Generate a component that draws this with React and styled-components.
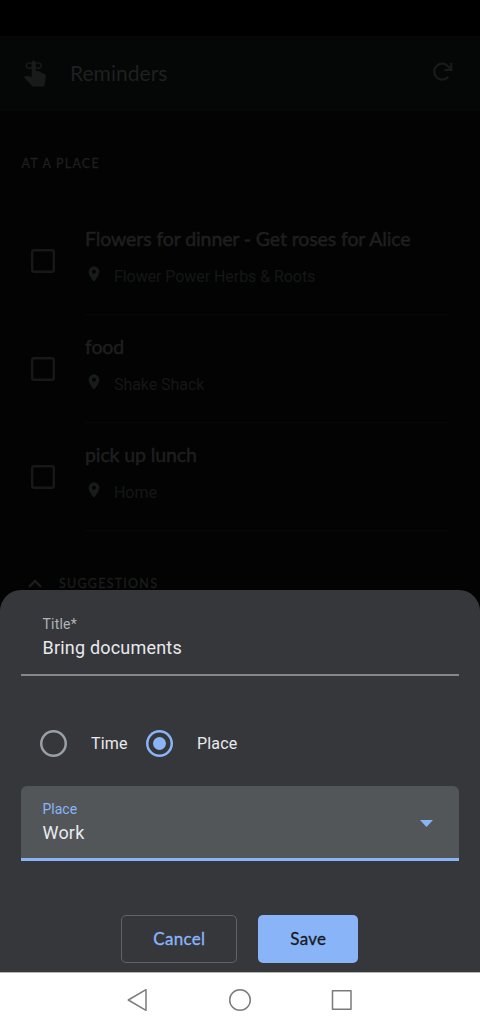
import React from "react";
import styled, { createGlobalStyle } from "styled-components";

const Global = createGlobalStyle`
  *, *::before, *::after { box-sizing: border-box; }
  body { margin: 0; background: #000; }
  button { appearance: none; padding: 0; margin: 0; }
`;

const brand = `Lato, "Open Sans", sans-serif`;
const plain = `Roboto, "Noto Sans", sans-serif`;

const Screen = styled.div`
  width: 480px;
  height: 1028px;
  display: flex;
  flex-direction: column;
  overflow: hidden;
  background: #030303;
  font-family: ${plain};
`;

const StatusBar = styled.div`
  flex: none;
  height: 36px;
  background: #000;
`;

const Header = styled.header`
  flex: none;
  height: 75px;
  display: flex;
  align-items: center;
  padding: 0 27px 2px 23px;
  background: #040706;
  color: #181b1a;
`;

const Heading = styled.h1`
  flex: 1;
  margin: 0 0 0 22px;
  font: 400 21px/28px ${brand};
  letter-spacing: 0.03px;
  color: #1f2020;
`;

const Content = styled.main`
  flex: none;
  height: 479px;
  overflow: hidden;
`;

const SectionLabel = styled.h2`
  margin: 0;
  padding: 43px 0 0 21.5px;
  font: 400 12.5px/20px ${brand};
  -webkit-text-stroke: 0.3px currentColor;
  letter-spacing: 1.2px;
  color: #1e1f1f;
`;

const List = styled.ul`
  list-style: none;
  margin: 0;
  padding: 33px 0 0 31px;
`;

const Item = styled.li`
  height: 108px;
  display: flex;
`;

const Checkbox = styled.span`
  flex: none;
  width: 24px;
  height: 24px;
  margin: 42px 30px 0 0;
  box-shadow: inset 0 0 0 2.4px #171919;
  border-radius: 3px;
`;

const ItemBody = styled.div`
  width: 364px;
  padding-top: 19px;
  border-bottom: 1px solid #070808;
`;

const ItemTitle = styled.div`
  font: 400 19.5px/26px ${brand};
  -webkit-text-stroke: 0.5px currentColor;
  letter-spacing: -0.11px;
  color: #1e1f1f;
  white-space: nowrap;
`;

const ItemPlace = styled.div`
  display: flex;
  align-items: center;
  margin-top: 13px;
  padding-left: 3px;
  font-size: 16px;
  line-height: 24px;
  letter-spacing: -0.06px;
  color: #141717;
  svg { margin: -7px 14px 0 0; color: #181b1b; }
`;

const Suggestions = styled.div`
  display: flex;
  align-items: center;
  padding: 41px 0 0 28px;
  font: 400 12.5px/24px ${brand};
  -webkit-text-stroke: 0.3px currentColor;
  letter-spacing: 1.25px;
  color: #1c1d1d;
  svg { margin-right: 17px; }
`;

const Sheet = styled.section`
  flex: none;
  height: 382px;
  padding: 0 21px;
  border-radius: 21px 21px 0 0;
  background: #36373b;
  display: flex;
  flex-direction: column;
`;

const Field = styled.div`
  height: ${(p) => (p.$filled ? 75 : 86)}px;
  padding: ${(p) => (p.$filled ? "12px 26px 0 21.500px" : "23px 26px 0 21.500px")};
  display: flex;
  justify-content: space-between;
  border-radius: ${(p) => (p.$filled ? "6px 6px 0 0" : 0)};
  border-bottom: ${(p) => (p.$filled ? "3px solid #8ab4f8" : "2px solid #85878c")};
  background: ${(p) => (p.$filled ? "#525659" : "transparent")};
`;

const FieldLabel = styled.div`
  font-size: 14px;
  line-height: 22px;
  letter-spacing: ${(p) => (p.$active ? 0 : 0.2)}px;
  color: ${(p) => (p.$active ? "#8ab4f8" : "#b0b3b8")};
`;

const FieldValue = styled.div`
  font-size: 18px;
  line-height: 26px;
  letter-spacing: 0.2px;
  color: #e8eaed;
`;

const Arrow = styled.svg`
  margin-top: 22px;
`;

const Choices = styled.div`
  display: flex;
  align-items: center;
  height: 110px;
  padding: 25px 0 0 19px;
`;

const Choice = styled.label`
  display: flex;
  align-items: center;
  margin-right: 18.5px;
  font-size: 16px;
  line-height: 24px;
  letter-spacing: 0.15px;
  color: #e8eaed;
`;

const Radio = styled.span`
  width: 27px;
  height: 27px;
  margin-right: 24px;
  display: grid;
  place-items: center;
  border-radius: 50%;
  box-shadow: inset 0 0 0 2.5px ${(p) => (p.$on ? "#8ab4f8" : "#9aa0a6")};
  &::after {
    content: "";
    width: 13px;
    height: 13px;
    border-radius: 50%;
    background: ${(p) => (p.$on ? "#8ab4f8" : "transparent")};
  }
`;

const Actions = styled.div`
  display: flex;
  justify-content: center;
  gap: 21px;
  padding: 54px 0.4px 0 0;
`;

const Button = styled.button`
  width: ${(p) => (p.$primary ? 100 : 116)}px;
  height: 48px;
  border: ${(p) => (p.$primary ? "0" : "1px solid #606367")};
  border-radius: 5px;
  background: ${(p) => (p.$primary ? "#8ab4f8" : "transparent")};
  color: ${(p) => (p.$primary ? "#17191d" : "#8ab4f8")};
  font: 400 17px/24px ${brand};
  -webkit-text-stroke: 0.3px currentColor;
  letter-spacing: 0.3px;
`;

const NavBar = styled.nav`
  flex: none;
  height: 56px;
  display: flex;
  justify-content: center;
  align-items: center;
  gap: 78px;
  padding-bottom: 1px;
  background: #fff;
  border-top: 1px solid #b5b5b7;
`;

const ReminderIcon = () => (
  <svg width="25" height="30" viewBox="0 0 25 30">
    <g fill="none" stroke="currentColor" strokeWidth="1.3">
      <ellipse cx="6.5" cy="7.6" rx="3.3" ry="2.8" />
      <ellipse cx="15" cy="7.6" rx="3.3" ry="2.8" />
    </g>
    <path
      fill="currentColor"
      d="M8.700 4.500a2 2 0 0 1 4 0v8.200h1.200q.7 0 1.300.3l6.300 3q1.500.8 1.300 2.400l-1.100 8q-.300 2.200-2.200 2.200H10.900q-1 0-1.700-.7L1 19.500l1.300-1.200q.6-.5 1.300-.3l5.100 1.100z"
    />
  </svg>
);

const RefreshIcon = () => (
  <svg width="20" height="22" viewBox="0 0 20 22" fill="none" stroke="currentColor" strokeWidth="2.200">
    <path d="M15.300 14.800A8 8 0 1 1 15.700 5L18 7.200" />
    <path d="M18.300 1v7h-7" />
  </svg>
);

const PinIcon = () => (
  <svg width="12" height="16" viewBox="0 0 12 16">
    <path
      fill="currentColor"
      fillRule="evenodd"
      d="M6 .3A5.400 5.400 0 0 0 .6 5.700C.6 9.700 6 15.700 6 15.700s5.400-6 5.400-10A5.400 5.400 0 0 0 6 .3zm0 7.400a2 2 0 1 1 0-4 2 2 0 0 1 0 4z"
    />
  </svg>
);

const ChevronUp = () => (
  <svg width="14" height="10" viewBox="0 0 14 10" fill="none" stroke="currentColor" strokeWidth="2.400">
    <path d="M1 8 7 2l6 6" />
  </svg>
);

const reminders = [
  { title: "Flowers for dinner - Get roses for Alice", place: "Flower Power Herbs & Roots" },
  { title: "food", place: "Shake Shack" },
  { title: "pick up lunch", place: "Home" },
];

export default function App() {
  return (
    <>
      <Global />
      <Screen>
        <StatusBar />
        <Header>
          <ReminderIcon />
          <Heading>Reminders</Heading>
          <RefreshIcon />
        </Header>
        <Content>
          <SectionLabel>AT A PLACE</SectionLabel>
          <List>
            {reminders.map((r) => (
              <Item key={r.title}>
                <Checkbox />
                <ItemBody>
                  <ItemTitle>{r.title}</ItemTitle>
                  <ItemPlace>
                    <PinIcon />
                    {r.place}
                  </ItemPlace>
                </ItemBody>
              </Item>
            ))}
          </List>
          <Suggestions>
            <ChevronUp />
            SUGGESTIONS
          </Suggestions>
        </Content>
        <Sheet>
          <Field>
            <div>
              <FieldLabel>Title*</FieldLabel>
              <FieldValue>Bring documents</FieldValue>
            </div>
          </Field>
          <Choices>
            <Choice>
              <Radio />
              Time
            </Choice>
            <Choice>
              <Radio $on />
              Place
            </Choice>
          </Choices>
          <Field $filled>
            <div>
              <FieldLabel $active>Place</FieldLabel>
              <FieldValue>Work</FieldValue>
            </div>
            <Arrow width="13" height="7" viewBox="0 0 13 7">
              <path d="M0 0h13L6.500 7z" fill="#8ab4f8" />
            </Arrow>
          </Field>
          <Actions>
            <Button>Cancel</Button>
            <Button $primary>Save</Button>
          </Actions>
        </Sheet>
        <NavBar>
          <svg width="24" height="24" viewBox="0 0 24 24" fill="none" stroke="#7b7b7b" strokeWidth="1.500" strokeLinejoin="round">
            <path d="M20 1.700v20.600L2.300 12z" />
          </svg>
          <svg width="24" height="24" viewBox="0 0 24 24" fill="none" stroke="#7b7b7b" strokeWidth="1.500">
            <circle cx="12" cy="12" r="10.300" />
          </svg>
          <svg width="24" height="24" viewBox="0 0 24 24" fill="none" stroke="#7b7b7b" strokeWidth="1.500" strokeLinejoin="round">
            <path d="M2.500 2.700h18.500v18.500H2.500z" />
          </svg>
        </NavBar>
      </Screen>
    </>
  );
}
